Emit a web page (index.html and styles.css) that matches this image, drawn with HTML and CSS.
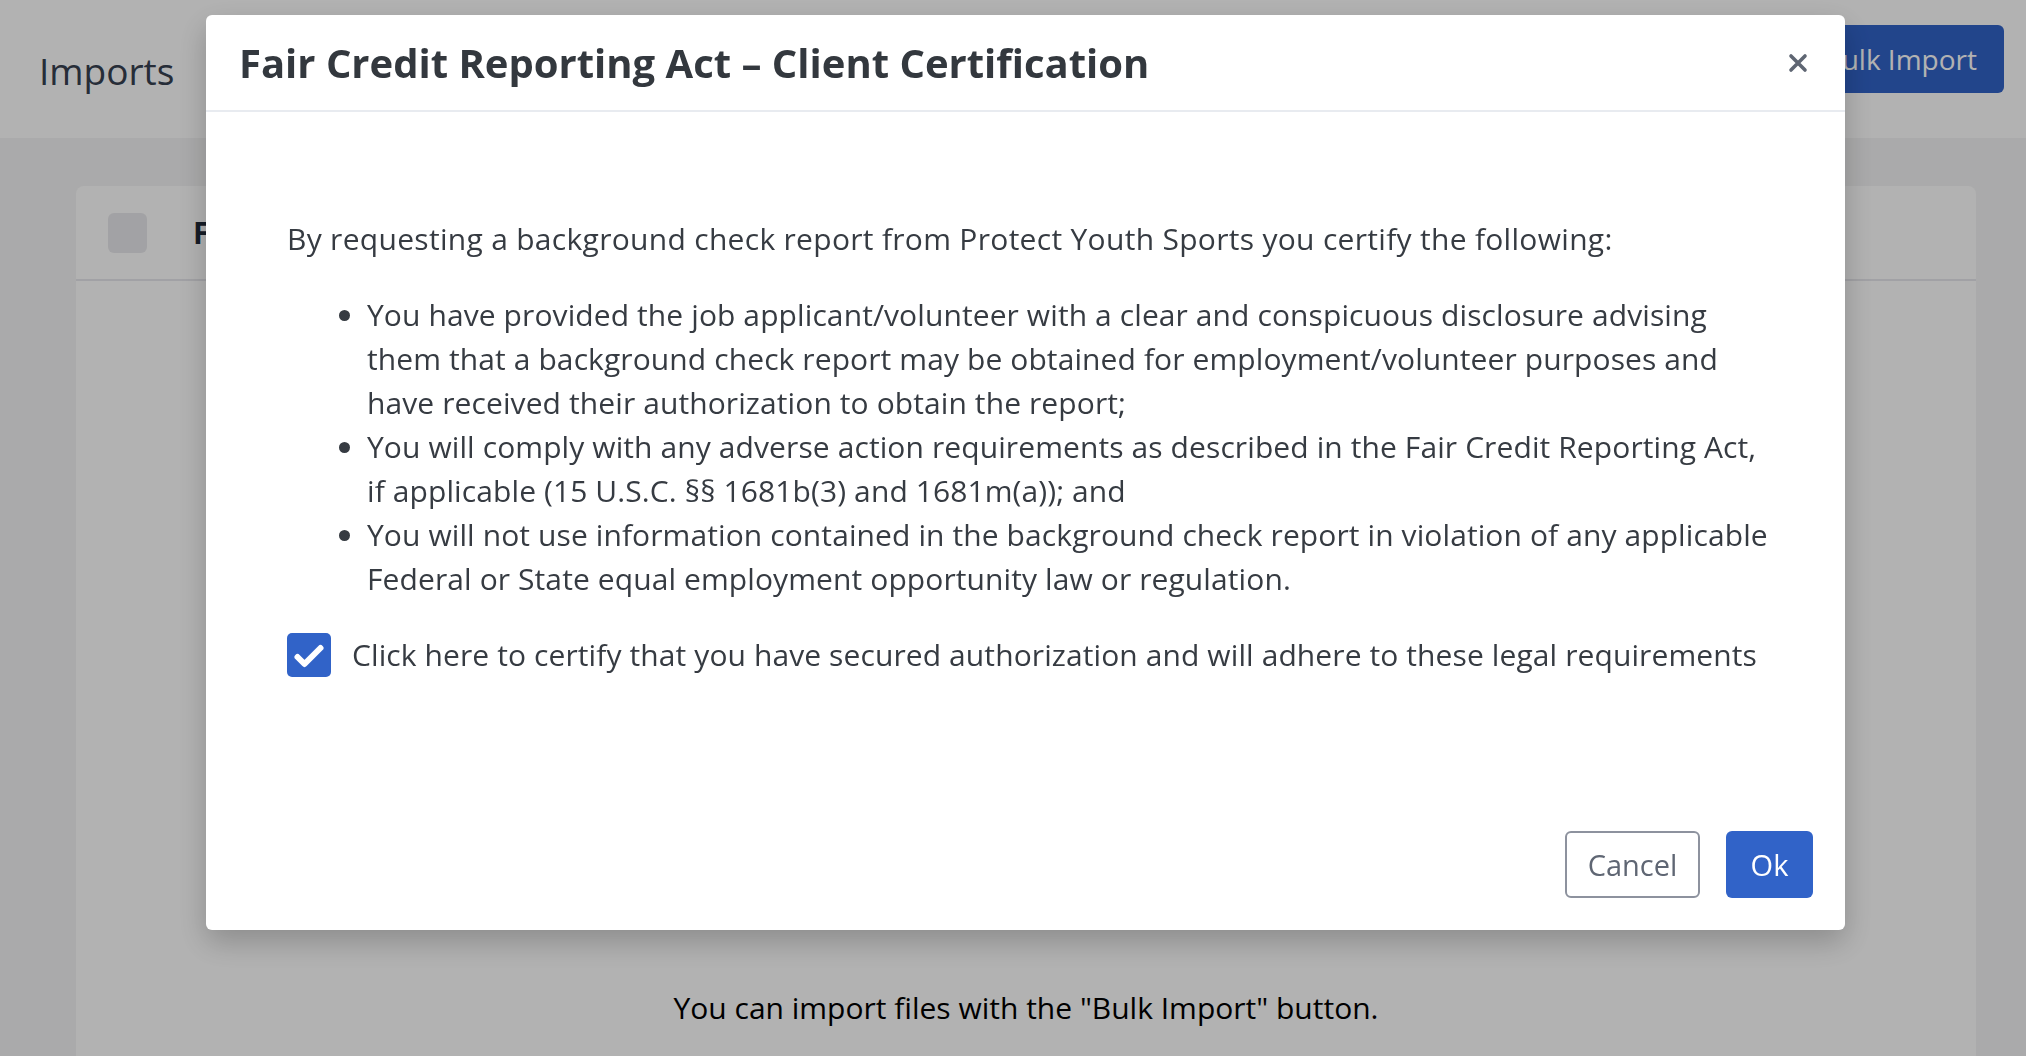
FILE: index.html
```html
<!DOCTYPE html>
<html>
<head>
<meta charset="utf-8">
<meta name="viewport" content="width=device-width, initial-scale=1">
<title>Imports</title>
<link rel="stylesheet" href="styles.css">
</head>
<body>
<header class="topbar">
  <h1 class="page-title">Imports</h1>
  <button class="btn btn-primary bulk">Bulk Import</button>
</header>
<main class="content">
  <section class="card">
    <div class="card-head">
      <span class="fake-check"></span>
      <span class="col-title">File</span>
    </div>
    <p class="empty">You can import files with the "Bulk Import" button.</p>
  </section>
</main>

<div class="overlay">
  <div class="modal">
    <div class="modal-head">
      <h2 class="modal-title">Fair Credit Reporting Act &ndash; Client Certification</h2>
      <button class="close" aria-label="Close">
        <svg width="20" height="20" viewBox="0 0 20 20"><path d="M3 3 L17 17 M17 3 L3 17" stroke="#5f6673" stroke-width="3.6" stroke-linecap="round" fill="none"/></svg>
      </button>
    </div>
    <div class="modal-body">
      <p class="lead">By requesting a background check report from Protect Youth Sports you certify the following:</p>
      <ul class="terms">
        <li>You have provided the job applicant/volunteer with a clear and conspicuous disclosure advising<br>
          them that a background check report may be obtained for employment/volunteer purposes and<br>
          have received their authorization to obtain the report;</li>
        <li>You will comply with any adverse action requirements as described in the Fair Credit Reporting Act,<br>
          if applicable (15 U.S.C. &sect;&sect; 1681b(3) and 1681m(a)); and</li>
        <li>You will not use information contained in the background check report in violation of any applicable<br>
          Federal or State equal employment opportunity law or regulation.</li>
      </ul>
      <label class="certify">
        <span class="box">
          <svg width="44" height="44" viewBox="0 0 44 44"><path d="M10.5 24 L17.5 31 L33.5 15" stroke="#fff" stroke-width="6" stroke-linecap="round" stroke-linejoin="round" fill="none"/></svg>
        </span>
        Click here to certify that you have secured authorization and will adhere to these legal requirements
      </label>
    </div>
    <div class="modal-foot">
      <button class="btn btn-outline">Cancel</button>
      <button class="btn btn-primary">Ok</button>
    </div>
  </div>
</div>
</body>
</html>
```

FILE: styles.css
```css
body {
  margin: 0;
  background: #f4f4f5;
  font-family: "Open Sans", "Noto Sans", sans-serif;
  color: #343a40;
}

.topbar {
  height: 138px;
  box-sizing: border-box;
  background: #fff;
  display: flex;
  justify-content: space-between;
  align-items: flex-start;
  padding: 25px 22px 0 39px;
}
.page-title {
  margin: 24px 0 0;
  font-size: 37px;
  line-height: 44px;
  font-weight: 400;
  color: #374151;
}

.btn {
  font-family: inherit;
  font-size: 29px;
  border-radius: 6px;
  cursor: pointer;
  box-sizing: border-box;
}
.btn-primary {
  background: #3163c8;
  color: #fff;
  border: none;
}
.btn-outline {
  background: #fff;
  color: #5f6673;
  border: 2px solid #8d929e;
}
.bulk {
  height: 68px;
  padding: 0 27px;
  font-size: 28px;
}

.content {
  padding: 48px 50px 0 76px;
}
.card {
  background: #fff;
  border-radius: 8px;
  height: 900px;
}
.card-head {
  height: 95px;
  box-sizing: border-box;
  border-bottom: 2px solid #e7e7ec;
  display: flex;
  align-items: center;
  padding-left: 32px;
  gap: 46px;
}
.fake-check {
  width: 39px;
  height: 40px;
  border-radius: 6px;
  background: #e9e9ec;
}
.col-title {
  font-weight: 700;
  font-size: 30px;
  color: #1f2937;
}
.empty {
  margin: 706px 0 0;
  text-align: center;
  font-size: 30px;
  color: #000;
}

.overlay {
  position: fixed;
  inset: 0;
  background: rgba(0, 0, 0, 0.3);
  padding: 15px 0 0 206px;
}
.modal {
  width: 1639px;
  background: #fff;
  border-radius: 6px;
  box-shadow: 0 12px 30px rgba(0, 0, 0, 0.22);
}
.modal-head {
  height: 97px;
  box-sizing: border-box;
  border-bottom: 2px solid #e8ebf0;
  display: flex;
  align-items: center;
  justify-content: space-between;
  padding: 0 37px 0 33px;
}
.modal-title {
  margin: 0;
  font-size: 40px;
  font-weight: 700;
  color: #33383e;
}
.close {
  background: none;
  border: none;
  padding: 0;
  width: 20px;
  height: 20px;
  display: flex;
}

.modal-body {
  padding: 105px 40px 0 81px;
  font-size: 30px;
  letter-spacing: 0.3px;
  line-height: 44px;
  color: #363b42;
}
.lead {
  margin: 0 0 32px;
}
.terms {
  margin: 0 0 32px;
  padding-left: 80px;
  letter-spacing: 0.1px;
}
.terms li {
  white-space: nowrap;
}
.certify {
  display: flex;
  align-items: center;
  gap: 21px;
  letter-spacing: 0.1px;
}
.box {
  width: 44px;
  height: 44px;
  border-radius: 5px;
  background: #3163c8;
  display: flex;
  flex: none;
}

.modal-foot {
  display: flex;
  justify-content: flex-end;
  gap: 26px;
  padding: 154px 32px 32px;
}
.modal-foot .btn {
  height: 67px;
}
.btn-outline {
  width: 135px;
}
.modal-foot .btn-primary {
  width: 87px;
}
```
